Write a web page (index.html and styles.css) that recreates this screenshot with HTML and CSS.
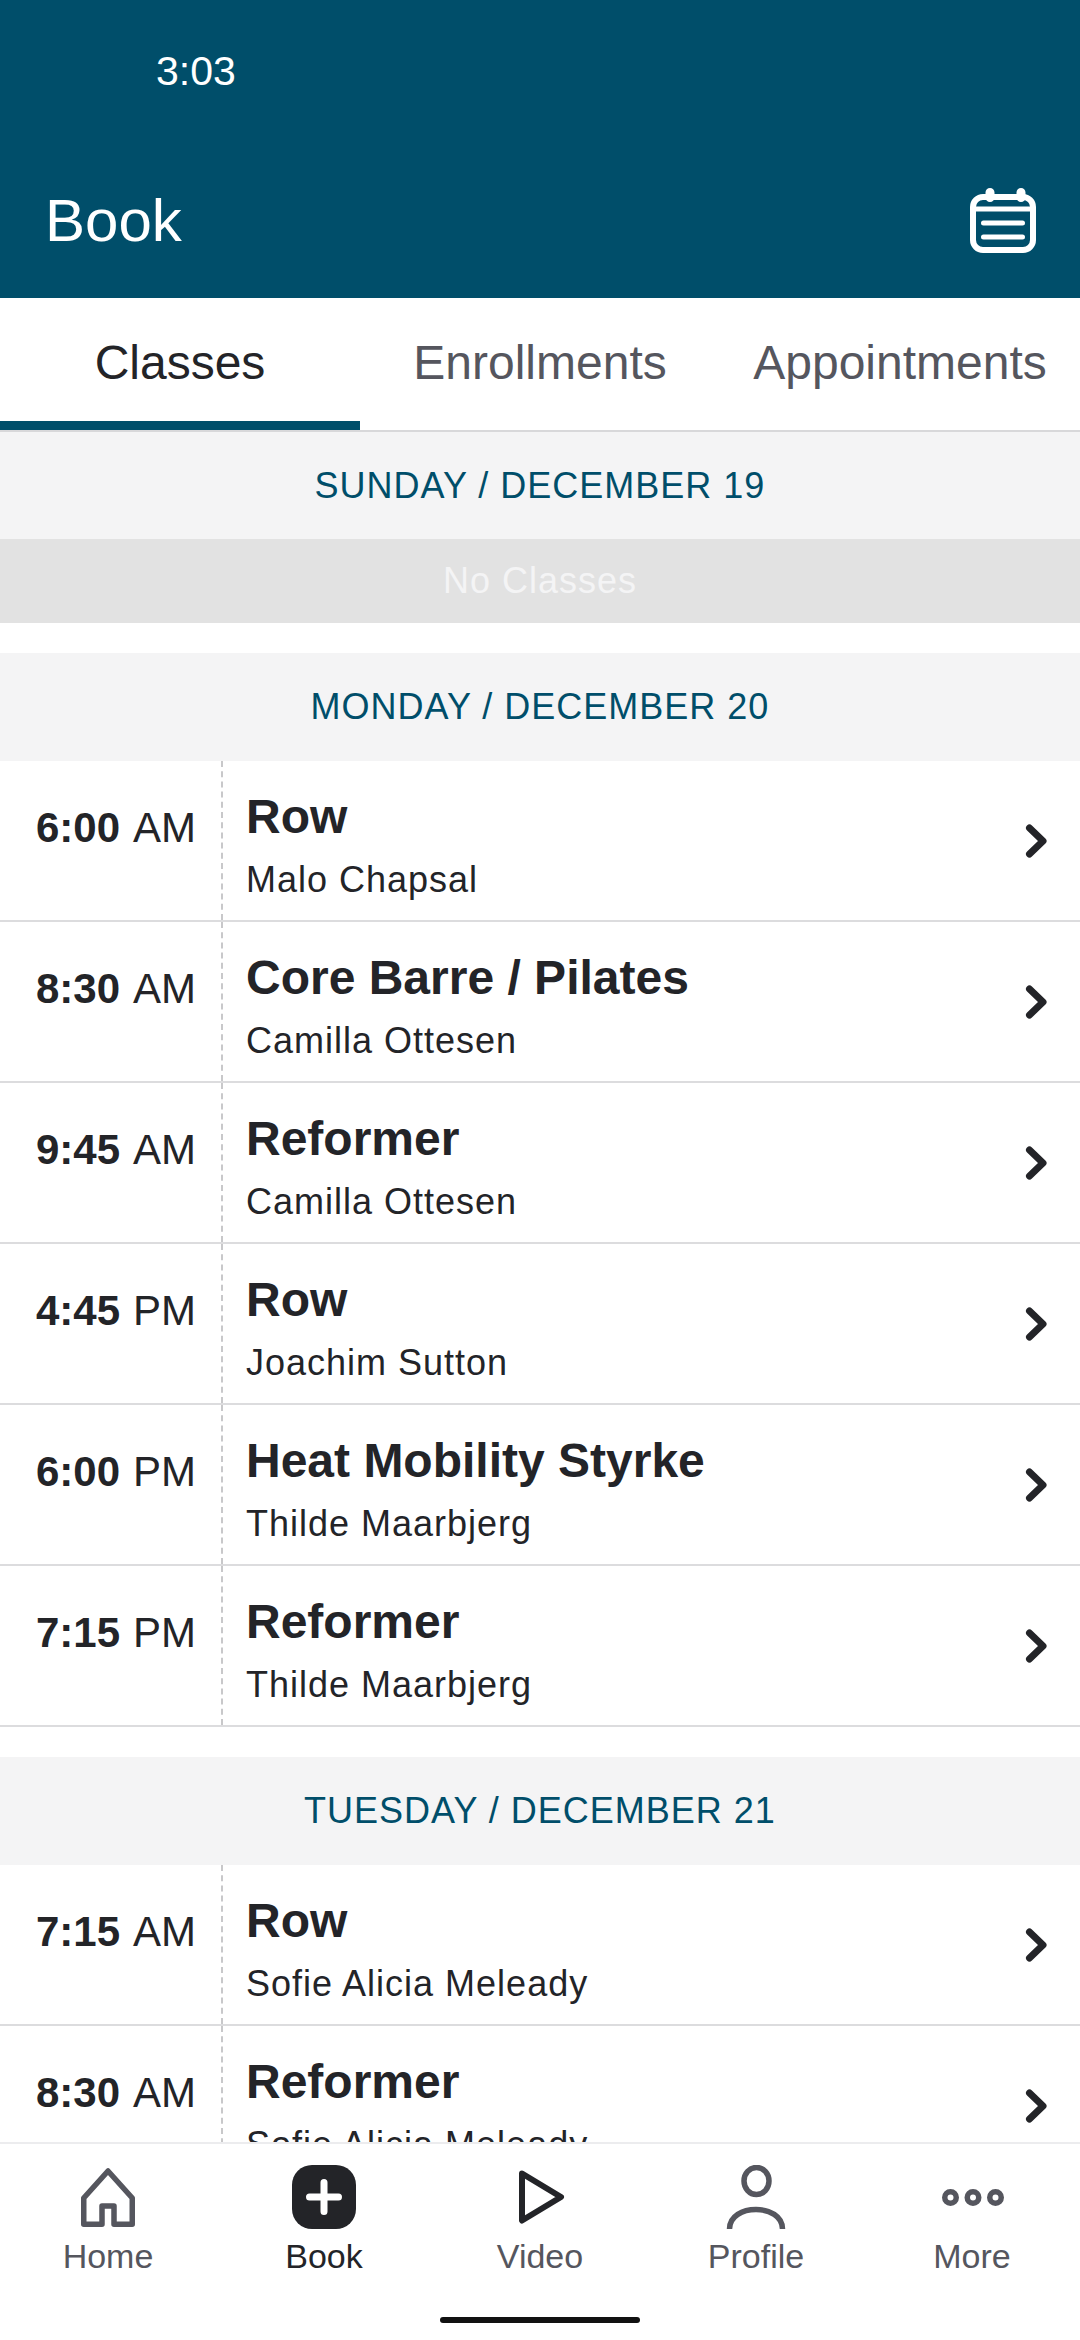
FILE: index.html
```html
<!DOCTYPE html>
<html lang="en">
<head>
    <meta charset="UTF-8">
    <meta name="viewport" content="width=device-width, initial-scale=1.0">
    <title>Book</title>
    <link rel="stylesheet" href="styles.css">
</head>
<body>
    <div class="phone">
        <header class="top-bar">
            <div class="clock">3:03</div>
            <div class="title-row">
                <h1>Book</h1>
                <svg class="calendar-icon" viewBox="0 0 66 66" fill="none" stroke="#fff">
                    <rect x="3" y="9" width="60" height="53" rx="10" stroke-width="6"/>
                    <path d="M20 4.5v5M51 4.5v5" stroke-width="9" stroke-linecap="round"/>
                    <path d="M5 21h56" stroke-width="5"/>
                    <path d="M13.5 35h39M13.5 49h39" stroke-width="5" stroke-linecap="round"/>
                </svg>
            </div>
        </header>

        <nav class="tabs">
            <div class="tab active">Classes</div>
            <div class="tab">Enrollments</div>
            <div class="tab">Appointments</div>
        </nav>

        <main class="schedule">
            <section class="day">
                <div class="day-header">SUNDAY / DECEMBER 19</div>
                <div class="no-classes">No Classes</div>
            </section>

            <section class="day">
                <div class="day-header">MONDAY / DECEMBER 20</div>
                <div class="class-row">
                    <div class="time"><b>6:00</b> AM</div>
                    <div class="info"><div class="name">Row</div><div class="teacher">Malo Chapsal</div></div>
                    <svg class="chevron" viewBox="0 0 24 36"><path d="M4.5 5L18 18 4.5 31"/></svg>
                </div>
                <div class="class-row">
                    <div class="time"><b>8:30</b> AM</div>
                    <div class="info"><div class="name">Core Barre / Pilates</div><div class="teacher">Camilla Ottesen</div></div>
                    <svg class="chevron" viewBox="0 0 24 36"><path d="M4.5 5L18 18 4.5 31"/></svg>
                </div>
                <div class="class-row">
                    <div class="time"><b>9:45</b> AM</div>
                    <div class="info"><div class="name">Reformer</div><div class="teacher">Camilla Ottesen</div></div>
                    <svg class="chevron" viewBox="0 0 24 36"><path d="M4.5 5L18 18 4.5 31"/></svg>
                </div>
                <div class="class-row">
                    <div class="time"><b>4:45</b> PM</div>
                    <div class="info"><div class="name">Row</div><div class="teacher">Joachim Sutton</div></div>
                    <svg class="chevron" viewBox="0 0 24 36"><path d="M4.5 5L18 18 4.5 31"/></svg>
                </div>
                <div class="class-row">
                    <div class="time"><b>6:00</b> PM</div>
                    <div class="info"><div class="name">Heat Mobility Styrke</div><div class="teacher">Thilde Maarbjerg</div></div>
                    <svg class="chevron" viewBox="0 0 24 36"><path d="M4.5 5L18 18 4.5 31"/></svg>
                </div>
                <div class="class-row">
                    <div class="time"><b>7:15</b> PM</div>
                    <div class="info"><div class="name">Reformer</div><div class="teacher">Thilde Maarbjerg</div></div>
                    <svg class="chevron" viewBox="0 0 24 36"><path d="M4.5 5L18 18 4.5 31"/></svg>
                </div>
            </section>

            <section class="day">
                <div class="day-header">TUESDAY / DECEMBER 21</div>
                <div class="class-row">
                    <div class="time"><b>7:15</b> AM</div>
                    <div class="info"><div class="name">Row</div><div class="teacher">Sofie Alicia Meleady</div></div>
                    <svg class="chevron" viewBox="0 0 24 36"><path d="M4.5 5L18 18 4.5 31"/></svg>
                </div>
                <div class="class-row">
                    <div class="time"><b>8:30</b> AM</div>
                    <div class="info"><div class="name">Reformer</div><div class="teacher">Sofie Alicia Meleady</div></div>
                    <svg class="chevron" viewBox="0 0 24 36"><path d="M4.5 5L18 18 4.5 31"/></svg>
                </div>
            </section>
        </main>

        <footer class="bottom-bar">
            <div class="nav-items">
                <div class="nav-item">
                    <svg class="nav-icon" viewBox="0 0 66 66" fill="none" stroke="#55565e" stroke-width="5.5" stroke-linejoin="round">
                        <path d="M33 6L8.75 33v26.25H27V41h12v18.25h18.25V33z"/>
                    </svg>
                    <span>Home</span>
                </div>
                <div class="nav-item current">
                    <svg class="nav-icon" viewBox="0 0 66 66">
                        <rect x="1" y="0" width="64" height="64" rx="20" fill="#232428"/>
                        <path d="M33 17.5v29M18.5 32h29" stroke="#fff" stroke-width="7" stroke-linecap="round"/>
                    </svg>
                    <span>Book</span>
                </div>
                <div class="nav-item">
                    <svg class="nav-icon" viewBox="0 0 66 66" fill="none" stroke="#232428" stroke-width="6" stroke-linejoin="round">
                        <path d="M15 8.5L54 32 15 55.5z"/>
                    </svg>
                    <span>Video</span>
                </div>
                <div class="nav-item">
                    <svg class="nav-icon" viewBox="0 0 66 66" fill="none" stroke="#55565e" stroke-width="5.5">
                        <ellipse cx="33.5" cy="16" rx="12.5" ry="13.5"/>
                        <path d="M6.5 64c0-26 53-26 53 0"/>
                    </svg>
                    <span>Profile</span>
                </div>
                <div class="nav-item">
                    <svg class="nav-icon" viewBox="0 0 66 66" fill="none" stroke="#55565e" stroke-width="5.5">
                        <circle cx="11.5" cy="32.5" r="5.75"/>
                        <circle cx="34" cy="32.5" r="5.75"/>
                        <circle cx="56.5" cy="32.5" r="5.75"/>
                    </svg>
                    <span>More</span>
                </div>
            </div>
            <div class="home-indicator"></div>
        </footer>
    </div>
</body>
</html>
```

FILE: styles.css
```css
* {
    box-sizing: border-box;
}
html, body {
    margin: 0;
    padding: 0;
}
body {
    font-family: "Liberation Sans", Arial, sans-serif;
    background-color: #fff;
    color: #232428;
}
.phone {
    width: 1080px;
    height: 2340px;
    display: flex;
    flex-direction: column;
    overflow: hidden;
}
.top-bar {
    height: 298px;
    flex: none;
    background-color: #004e6a;
    color: #fff;
    padding-top: 48px;
}
.clock {
    font-size: 41px;
    line-height: 46px;
    margin-left: 156px;
}
.title-row {
    display: flex;
    justify-content: space-between;
    align-items: center;
    margin-top: 94px;
    padding: 0 44px 0 45px;
}
.title-row h1 {
    margin: 0;
    font-size: 60px;
    line-height: 66px;
    font-weight: normal;
}
.calendar-icon {
    width: 66px;
    height: 66px;
}
.tabs {
    height: 134px;
    flex: none;
    display: flex;
    border-bottom: 2px solid #d8d8da;
}
.tab {
    width: 360px;
    display: flex;
    align-items: center;
    justify-content: center;
    font-size: 48px;
    color: #55565e;
    padding-top: 6px;
    border-bottom: 9px solid transparent;
}
.tab.active {
    color: #232428;
    border-bottom-color: #004e6a;
}
.schedule {
    flex: 1;
    overflow: hidden;
}
.day {
    margin-bottom: 30px;
}
.day-header {
    height: 108px;
    display: flex;
    align-items: center;
    justify-content: center;
    background-color: #f4f4f5;
    color: #004e6a;
    font-size: 36px;
    letter-spacing: 1px;
}
.day:first-child .day-header {
    height: 107px;
}
.no-classes {
    height: 84px;
    display: flex;
    align-items: center;
    justify-content: center;
    background-color: #e2e2e2;
    color: #f4f4f5;
    font-size: 36px;
    letter-spacing: 1px;
}
.class-row {
    height: 161px;
    display: flex;
    align-items: stretch;
    border-bottom: 2px solid #dcdcde;
}
.time {
    width: 223px;
    flex: none;
    padding: 0 25px 26px 0;
    display: flex;
    align-items: center;
    justify-content: flex-end;
    gap: 13px;
    font-size: 42px;
    border-right: 2px dashed #c8c8ca;
}
.time b {
    font-weight: bold;
}
.info {
    flex: 1;
    padding: 30px 0 0 23px;
}
.name {
    font-size: 48px;
    line-height: 52px;
    font-weight: bold;
}
.teacher {
    font-size: 36px;
    line-height: 42px;
    margin-top: 16px;
    letter-spacing: 1px;
}
.chevron {
    width: 24px;
    height: 36px;
    align-self: center;
    margin-right: 31px;
    fill: none;
    stroke: #232428;
    stroke-width: 7;
    stroke-linecap: round;
    stroke-linejoin: round;
}
.bottom-bar {
    height: 198px;
    flex: none;
    background-color: #fff;
    border-top: 2px solid #ececee;
}
.nav-items {
    display: flex;
    padding-top: 21px;
}
.nav-item {
    width: 216px;
    display: flex;
    flex-direction: column;
    align-items: center;
    color: #55565e;
    font-size: 34px;
    line-height: 38px;
}
.nav-item.current {
    color: #232428;
}
.nav-icon {
    width: 66px;
    height: 66px;
    margin-bottom: 6px;
}
.home-indicator {
    width: 200px;
    height: 6px;
    margin: 42px auto 0;
    border-radius: 3px;
    background-color: #111;
}
```
